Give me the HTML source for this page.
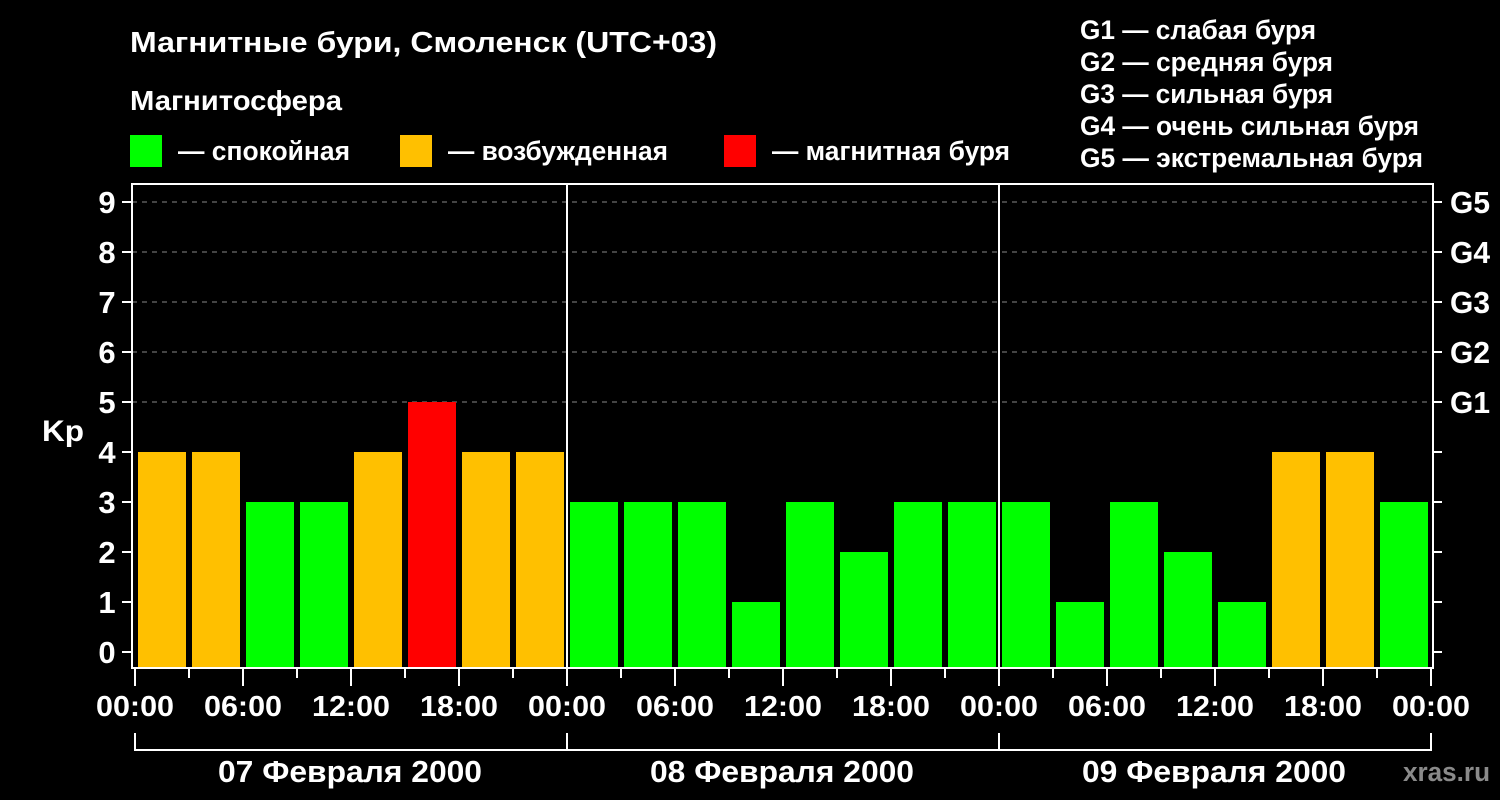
<!DOCTYPE html>
<html><head><meta charset="utf-8"><style>
html,body{margin:0;padding:0;background:#000;}
svg{display:block;}
text{font-family:"Liberation Sans",sans-serif;font-weight:bold;fill:#fff;}
</style></head><body>
<svg width="1500" height="800" viewBox="0 0 1500 800" xmlns="http://www.w3.org/2000/svg">
<rect width="1500" height="800" fill="#000"/>
<text x="130" y="52" font-size="29" textLength="587" lengthAdjust="spacingAndGlyphs">Магнитные бури, Смоленск (UTC+03)</text>
<text x="130" y="110" font-size="28" textLength="212" lengthAdjust="spacingAndGlyphs">Магнитосфера</text>
<rect x="130" y="135" width="32" height="32" fill="#00ff00"/>
<text x="178" y="160" font-size="27" textLength="172" lengthAdjust="spacingAndGlyphs">— спокойная</text>
<rect x="400" y="135" width="32" height="32" fill="#ffc000"/>
<text x="448" y="160" font-size="27" textLength="220" lengthAdjust="spacingAndGlyphs">— возбужденная</text>
<rect x="724" y="135" width="32" height="32" fill="#ff0000"/>
<text x="772" y="160" font-size="27" textLength="238" lengthAdjust="spacingAndGlyphs">— магнитная буря</text>
<g font-size="27">
<text x="1080" y="39" textLength="236" lengthAdjust="spacingAndGlyphs">G1 — слабая буря</text>
<text x="1080" y="71" textLength="253" lengthAdjust="spacingAndGlyphs">G2 — средняя буря</text>
<text x="1080" y="103" textLength="253" lengthAdjust="spacingAndGlyphs">G3 — сильная буря</text>
<text x="1080" y="135" textLength="339" lengthAdjust="spacingAndGlyphs">G4 — очень сильная буря</text>
<text x="1080" y="167" textLength="343" lengthAdjust="spacingAndGlyphs">G5 — экстремальная буря</text>
</g>
<g stroke="#888" stroke-width="1" stroke-dasharray="5,5">
<line x1="132" y1="202" x2="1433" y2="202"/>
<line x1="132" y1="252" x2="1433" y2="252"/>
<line x1="132" y1="302" x2="1433" y2="302"/>
<line x1="132" y1="352" x2="1433" y2="352"/>
<line x1="132" y1="402" x2="1433" y2="402"/>
</g>
<g fill="#ffc000">
<rect x="138" y="452" width="48" height="216"/><rect x="192" y="452" width="48" height="216"/>
<rect x="354" y="452" width="48" height="216"/><rect x="462" y="452" width="48" height="216"/><rect x="516" y="452" width="48" height="216"/>
<rect x="1272" y="452" width="48" height="216"/><rect x="1326" y="452" width="48" height="216"/>
</g>
<rect x="408" y="402" width="48" height="266" fill="#ff0000"/>
<g fill="#00ff00">
<rect x="246" y="502" width="48" height="166"/><rect x="300" y="502" width="48" height="166"/>
<rect x="570" y="502" width="48" height="166"/><rect x="624" y="502" width="48" height="166"/><rect x="678" y="502" width="48" height="166"/>
<rect x="732" y="602" width="48" height="66"/><rect x="786" y="502" width="48" height="166"/><rect x="840" y="552" width="48" height="116"/>
<rect x="894" y="502" width="48" height="166"/><rect x="948" y="502" width="48" height="166"/>
<rect x="1002" y="502" width="48" height="166"/><rect x="1056" y="602" width="48" height="66"/><rect x="1110" y="502" width="48" height="166"/>
<rect x="1164" y="552" width="48" height="116"/><rect x="1218" y="602" width="48" height="66"/><rect x="1380" y="502" width="48" height="166"/>
</g>
<g stroke="#fff" stroke-width="2" fill="none">
<rect x="132" y="184" width="1301" height="484"/>
<line x1="567" y1="184" x2="567" y2="668"/>
<line x1="999" y1="184" x2="999" y2="668"/>
</g>
<g stroke="#fff" stroke-width="2" fill="none">
<path d="M122 652H132M122 602H132M122 552H132M122 502H132M122 452H132M122 402H132M122 352H132M122 302H132M122 252H132M122 202H132"/>
<path d="M1433 652H1442M1433 602H1442M1433 552H1442M1433 502H1442M1433 452H1442M1433 402H1442M1433 352H1442M1433 302H1442M1433 252H1442M1433 202H1442"/>
<path d="M135 668V686M243 668V686M351 668V686M459 668V686M567 668V686M675 668V686M783 668V686M891 668V686M999 668V686M1107 668V686M1215 668V686M1323 668V686M1431 668V686"/>
<path d="M189 668V678M297 668V678M405 668V678M513 668V678M621 668V678M729 668V678M837 668V678M945 668V678M1053 668V678M1161 668V678M1269 668V678M1377 668V678"/>
<path d="M135 733V750H1431V733M567 733V750M999 733V750"/>
</g>
<g font-size="31" text-anchor="middle">
<text x="107" y="663">0</text><text x="107" y="613">1</text><text x="107" y="563">2</text><text x="107" y="513">3</text><text x="107" y="463">4</text>
<text x="107" y="413">5</text><text x="107" y="363">6</text><text x="107" y="313">7</text><text x="107" y="263">8</text><text x="107" y="213">9</text>
</g>
<text x="42" y="441" font-size="30" textLength="42" lengthAdjust="spacingAndGlyphs">Kp</text>
<g font-size="31">
<text x="1450" y="413" textLength="40" lengthAdjust="spacingAndGlyphs">G1</text><text x="1450" y="363" textLength="40" lengthAdjust="spacingAndGlyphs">G2</text><text x="1450" y="313" textLength="40" lengthAdjust="spacingAndGlyphs">G3</text><text x="1450" y="263" textLength="40" lengthAdjust="spacingAndGlyphs">G4</text><text x="1450" y="213" textLength="40" lengthAdjust="spacingAndGlyphs">G5</text>
</g>
<g font-size="29" text-anchor="middle">
<text x="135" y="716" textLength="78" lengthAdjust="spacingAndGlyphs">00:00</text><text x="243" y="716" textLength="78" lengthAdjust="spacingAndGlyphs">06:00</text><text x="351" y="716" textLength="78" lengthAdjust="spacingAndGlyphs">12:00</text><text x="459" y="716" textLength="78" lengthAdjust="spacingAndGlyphs">18:00</text>
<text x="567" y="716" textLength="78" lengthAdjust="spacingAndGlyphs">00:00</text><text x="675" y="716" textLength="78" lengthAdjust="spacingAndGlyphs">06:00</text><text x="783" y="716" textLength="78" lengthAdjust="spacingAndGlyphs">12:00</text><text x="891" y="716" textLength="78" lengthAdjust="spacingAndGlyphs">18:00</text>
<text x="999" y="716" textLength="78" lengthAdjust="spacingAndGlyphs">00:00</text><text x="1107" y="716" textLength="78" lengthAdjust="spacingAndGlyphs">06:00</text><text x="1215" y="716" textLength="78" lengthAdjust="spacingAndGlyphs">12:00</text><text x="1323" y="716" textLength="78" lengthAdjust="spacingAndGlyphs">18:00</text>
<text x="1431" y="716" textLength="78" lengthAdjust="spacingAndGlyphs">00:00</text>
</g>
<g font-size="31" text-anchor="middle">
<text x="350" y="782" textLength="264" lengthAdjust="spacingAndGlyphs">07 Февраля 2000</text>
<text x="782" y="782" textLength="264" lengthAdjust="spacingAndGlyphs">08 Февраля 2000</text>
<text x="1214" y="782" textLength="264" lengthAdjust="spacingAndGlyphs">09 Февраля 2000</text>
</g>
<text x="1403" y="781" font-size="27" style="fill:#8a8a8a" textLength="87" lengthAdjust="spacingAndGlyphs">xras.ru</text>
</svg>
</body></html>
